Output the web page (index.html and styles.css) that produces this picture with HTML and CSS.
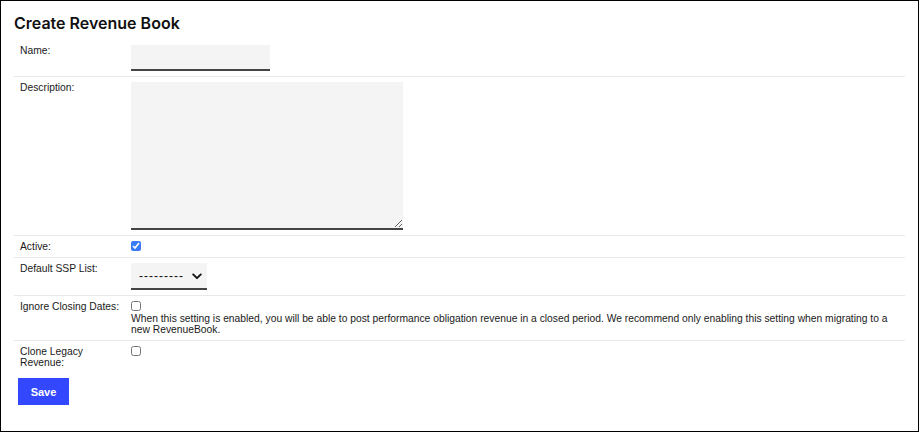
FILE: index.html
```html
<!DOCTYPE html>
<html lang="en">
<head>
<meta charset="utf-8">
<title>Create Revenue Book</title>
<link rel="stylesheet" href="styles.css">
</head>
<body>
<main class="page">
  <h1 class="title">Create Revenue Book</h1>
  <form class="form">
    <div class="row">
      <label class="label" for="name">Name:</label>
      <div class="field"><input class="text-input" id="name" type="text"></div>
    </div>
    <div class="row">
      <label class="label" for="desc">Description:</label>
      <div class="field"><textarea class="textarea" id="desc"></textarea></div>
    </div>
    <div class="row">
      <label class="label" for="active">Active:</label>
      <div class="field"><input class="check" id="active" type="checkbox" checked></div>
    </div>
    <div class="row">
      <label class="label" for="ssp">Default SSP List:</label>
      <div class="field">
        <div class="select-wrap">
          <select class="select" id="ssp"><option>---------</option></select>
          <svg class="chevron" width="10" height="7" viewBox="0 0 10 7"><path d="M1.2 1.4 L5 5.2 L8.8 1.4" fill="none" stroke="#111" stroke-width="1.9" stroke-linecap="round" stroke-linejoin="round"/></svg>
        </div>
      </div>
    </div>
    <div class="row">
      <label class="label" for="ignore">Ignore Closing Dates:</label>
      <div class="field">
        <input class="check" id="ignore" type="checkbox">
        <p class="help">When this setting is enabled, you will be able to post performance obligation revenue in a closed period. We recommend only enabling this setting when migrating to a new RevenueBook.</p>
      </div>
    </div>
    <div class="row">
      <label class="label" for="clone">Clone Legacy Revenue:</label>
      <div class="field"><input class="check" id="clone" type="checkbox"></div>
    </div>
    <button class="save" type="button">Save</button>
  </form>
</main>
</body>
</html>
```

FILE: styles.css
```css
html, body {
  margin: 0;
  padding: 0;
  background: #fff;
}

.page {
  box-sizing: border-box;
  width: 919px;
  height: 432px;
  border: 1px solid #000;
  padding: 12px 13px;
  font-family: "Liberation Sans", Arial, sans-serif;
  color: #1a1a1a;
}

.title {
  margin: 0 0 7px 0;
  font-family: Inter, "Liberation Sans", sans-serif;
  font-size: 16px;
  line-height: 20px;
  font-weight: 600;
  color: #111;
}

.form {
  display: flex;
  flex-direction: column;
  align-items: flex-start;
}

.row {
  align-self: stretch;
  display: grid;
  grid-template-columns: 117px 1fr;
  padding: 5px 0;
  border-bottom: 1px solid #e9e9e9;
  font-size: 10.3px;
  line-height: 11px;
}

.row:last-of-type {
  border-bottom: none;
}

.label {
  padding: 0 6px;
}

.field {
  display: flex;
  flex-direction: column;
  align-items: flex-start;
}

.text-input {
  box-sizing: border-box;
  width: 139px;
  height: 26px;
  margin: 0;
  border: none;
  border-bottom: 2px solid #444;
  background: #f4f4f4;
  outline: none;
}

.textarea {
  box-sizing: border-box;
  width: 272px;
  height: 148px;
  margin: 0;
  border: none;
  border-bottom: 2px solid #444;
  background: #f4f4f4;
  display: block;
}

.check {
  width: 10px;
  height: 10px;
  margin: 0 0 1px 0;
  accent-color: #3a7af6;
}

.select-wrap {
  position: relative;
  display: inline-block;
}

.select {
  box-sizing: border-box;
  width: 76px;
  height: 27px;
  margin: 0;
  padding: 0 0 0 8px;
  border: none;
  border-bottom: 2px solid #444;
  background: #f4f4f4;
  appearance: none;
  -webkit-appearance: none;
  font-family: "Liberation Sans", Arial, sans-serif;
  font-size: 12px;
  letter-spacing: 1px;
  color: #111;
  border-radius: 0;
}

.chevron {
  position: absolute;
  right: 5px;
  top: 10px;
  pointer-events: none;
}

.help {
  margin: 1px 0 0 0;
  font-size: 10.3px;
  line-height: 11px;
}

.save {
  margin: 5px 0 0 4px;
  width: 51px;
  height: 27px;
  border: none;
  background: #3347ff;
  color: #fff;
  font-family: "Liberation Sans", Arial, sans-serif;
  font-size: 11px;
  font-weight: 700;
  padding: 0;
}
```
